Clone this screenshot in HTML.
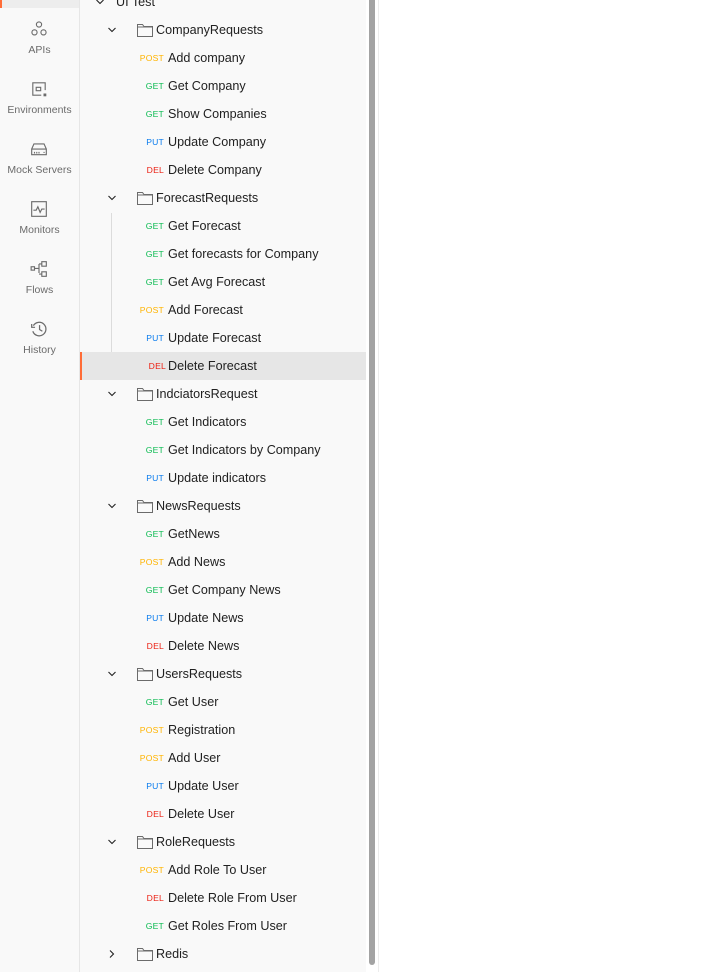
<!DOCTYPE html>
<html><head><style>
*{margin:0;padding:0;box-sizing:border-box}
body{width:727px;height:972px;overflow:hidden;background:#fff;font-family:"Liberation Sans",sans-serif;position:relative}
.nav{position:absolute;left:0;top:0;width:80px;height:972px;background:#f9f9f9;border-right:1px solid #e6e6e6}
.navsel{position:absolute;left:0;top:0;width:79px;height:8px;background:#ededed;border-left:2px solid #ff6c37}
.ni{position:absolute;left:0;width:79px;text-align:center;font-size:10.5px;color:#6b6b6b}
.ni svg{position:absolute;left:30px;top:0}
.ni span{position:absolute;left:0;width:79px;top:24px}
.panel{position:absolute;left:80px;top:0;width:286px;height:972px;background:#f9f9f9}
.row{position:absolute;left:80px;width:286px;height:28px;font-size:12.6px;color:#212121;line-height:28px}
.m{position:absolute;right:202px;font-size:8.6px;letter-spacing:.2px;top:0}
.t{position:absolute;left:88px}
.g{color:#0cbb52}.p{color:#ffb400}.u{color:#097bed}.d{color:#eb2013}
.f .t{left:76px}
.chev{position:absolute;left:27px;top:9px}
.fold{position:absolute;left:57px;top:7px}
.sel{background:#e6e6e6;border-left:2px solid #ff6c37}
.sb{position:absolute;left:369px;top:0;width:6px;height:965px;background:#a3a3a3;border-radius:0 0 3px 3px}
.bd{position:absolute;left:378px;top:0;width:1px;height:972px;background:#ececec}
</style></head><body>
<div class="nav">
<div class="navsel"></div>
<div class="ni" style="top:20px"><svg width="18" height="18" viewBox="0 0 16 16" fill="none" stroke="#6b6b6b" stroke-width="1"><circle cx="8" cy="4" r="2.3"/><circle cx="4" cy="11" r="2.3"/><circle cx="12" cy="11" r="2.3"/></svg><span>APIs</span></div>
<div class="ni" style="top:80px"><svg width="18" height="18" viewBox="0 0 16 16" fill="none" stroke="#6b6b6b" stroke-width="1"><path d="M13.5 9V2.5h-11v11H10"/><rect x="5.5" y="6.5" width="4" height="3"/><rect x="12" y="12" width="2.5" height="2.5" fill="#6b6b6b" stroke="none"/></svg><span>Environments</span></div>
<div class="ni" style="top:140px"><svg width="18" height="18" viewBox="0 0 16 16" fill="none" stroke="#6b6b6b" stroke-width="1"><path d="M1.5 8l2-4.5h9l2 4.5v5h-13z M1.5 8h13 M4 10.5v1.5 M6 10.5v1.5 M8 10.5v1.5 M12 11h1"/></svg><span>Mock Servers</span></div>
<div class="ni" style="top:200px"><svg width="18" height="18" viewBox="0 0 16 16" fill="none" stroke="#6b6b6b" stroke-width="1"><rect x="1.5" y="1.5" width="13" height="13"/><path d="M3 9h2.5l1.5-3 2 5 1.5-3H13"/></svg><span>Monitors</span></div>
<div class="ni" style="top:260px"><svg width="18" height="18" viewBox="0 0 16 16" fill="none" stroke="#6b6b6b" stroke-width="1"><rect x="1" y="6" width="3" height="3"/><rect x="10.5" y="1.5" width="4" height="4"/><rect x="10.5" y="10.5" width="4" height="4"/><path d="M4 7.5h4 M8 3.5v8 M8 3.5h2.5 M8 12.5h2.5"/></svg><span>Flows</span></div>
<div class="ni" style="top:320px"><svg width="18" height="18" viewBox="0 0 16 16" fill="none" stroke="#6b6b6b" stroke-width="1.1"><path d="M3 5A6 6 0 1 1 2.5 10"/><path d="M1.5 3.5V6.5h3"/><path d="M8.5 4.5v4l2.5 1.5"/></svg><span>History</span></div>
</div>
<div class="panel"></div>
<div style="position:absolute;left:111px;top:213px;width:1px;height:139px;background:#dcdcdc"></div>
<div id="tree"></div>
<div class="sb"></div>
<div class="bd"></div>
<script>
var chevD='<svg class="chev" width="10" height="10" viewBox="0 0 10 10" fill="none" stroke="#212121" stroke-width="1.1"><path d="M1.5 3l3.5 3.5L8.5 3"/></svg>';
var chevR='<svg class="chev" width="10" height="10" viewBox="0 0 10 10" fill="none" stroke="#212121" stroke-width="1.1"><path d="M3 1.5l3.5 3.5L3 8.5"/></svg>';
var fold='<svg class="fold" width="16" height="14" viewBox="0 0 16 14" fill="none" stroke="#6b6b6b" stroke-width="1"><path d="M0.5 1.5h5l1.5 2h8.5v10h-15z M0.5 4h15"/></svg>';
var rows=[
['F','CompanyRequests'],['p','Add company'],['g','Get Company'],['g','Show Companies'],['u','Update Company'],['d','Delete Company'],
['F','ForecastRequests'],['g','Get Forecast'],['g','Get forecasts for Company'],['g','Get Avg Forecast'],['p','Add Forecast'],['u','Update Forecast'],['d','Delete Forecast'],
['F','IndciatorsRequest'],['g','Get Indicators'],['g','Get Indicators by Company'],['u','Update indicators'],
['F','NewsRequests'],['g','GetNews'],['p','Add News'],['g','Get Company News'],['u','Update News'],['d','Delete News'],
['F','UsersRequests'],['g','Get User'],['p','Registration'],['p','Add User'],['u','Update User'],['d','Delete User'],
['F','RoleRequests'],['p','Add Role To User'],['d','Delete Role From User'],['g','Get Roles From User'],
['R','Redis']];
var lab={g:'GET',p:'POST',u:'PUT',d:'DEL'};
var h='<div class="row" style="top:-12px"><svg class="chev" style="left:15px" width="10" height="10" viewBox="0 0 10 10" fill="none" stroke="#212121" stroke-width="1.1"><path d="M1.5 3l3.5 3.5L8.5 3"/></svg><span class="t" style="left:36px">UI Test</span></div>';
rows.forEach(function(r,i){var top=16+i*28;
if(r[0]=='F'||r[0]=='R'){h+='<div class="row f" style="top:'+top+'px">'+(r[0]=='F'?chevD:chevR)+fold+'<span class="t">'+r[1]+'</span></div>';}
else{var s=r[1]=='Delete Forecast';h+='<div class="row'+(s?' sel':'')+'" style="top:'+top+'px"><span class="m '+r[0]+'"'+(s?' style="right:200px"':'')+'>'+lab[r[0]]+'</span><span class="t"'+(s?' style="left:86px"':'')+'>'+r[1]+'</span></div>';}
});
document.getElementById('tree').innerHTML=h;
</script>
</body></html>
